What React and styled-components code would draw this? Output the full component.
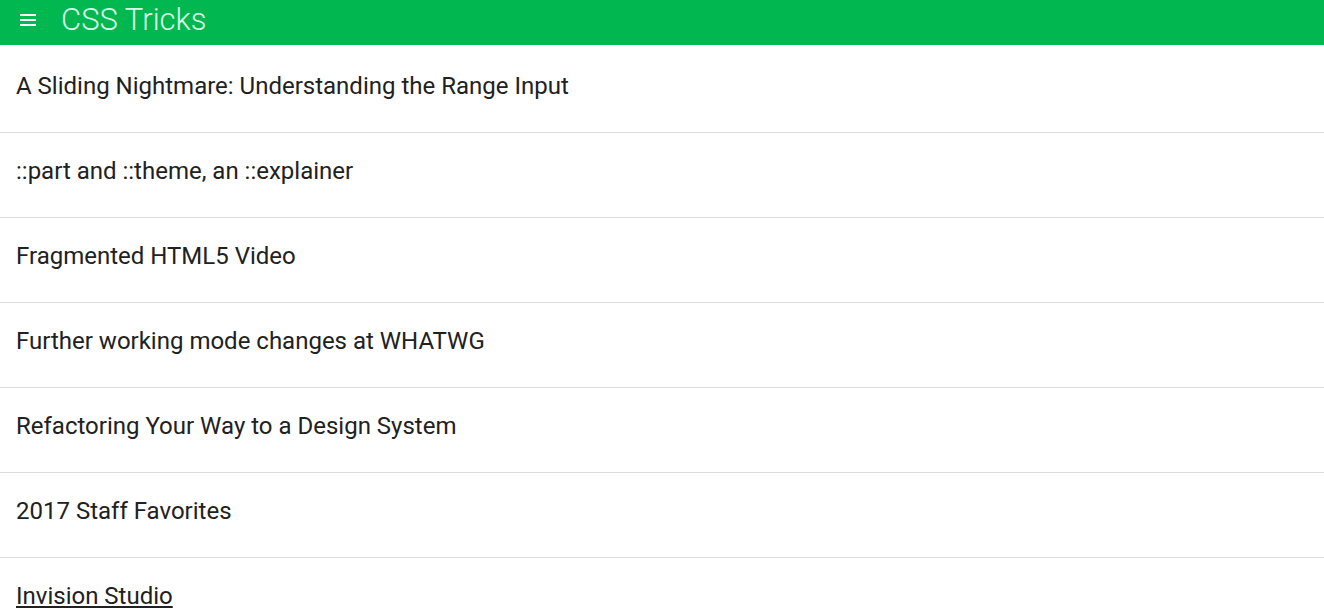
import React from 'react'
import styled, { createGlobalStyle } from 'styled-components'

const GlobalStyle = createGlobalStyle`
  body {
    margin: 0;
    font-family: Roboto, "Liberation Sans", sans-serif;
    background: #fff;
    color: #212121;
  }
`

const Page = styled.div`
  display: flex;
  flex-direction: column;
  height: 610px;
  overflow: hidden;
`

const Toolbar = styled.header`
  display: flex;
  align-items: center;
  height: 45px;
  flex-shrink: 0;
  background: #00b84f;
  color: #fff;
  padding-left: 20px;
`

const MenuButton = styled.div`
  display: flex;
  flex-direction: column;
  gap: 3px;
  width: 16px;
  margin-top: -6px;
  margin-right: 25px;
  span {
    height: 2px;
    background: #fff;
  }
`

const Title = styled.h1`
  margin: 0;
  margin-top: -7px;
  font-size: 31px;
  font-weight: 300;
  color: #d9ffe6;
`

const List = styled.ul`
  list-style: none;
  margin: 0;
  padding: 3px 0 0;
`

const Item = styled.li`
  display: flex;
  align-items: center;
  box-sizing: border-box;
  height: 85px;
  padding: 0 0 8px 16px;
  border-bottom: 1px solid #dcdcdc;
  font-size: 24px;
  color: #212121;
  text-decoration: ${(p) => (p.$active ? 'underline' : 'none')};
`

const posts = [
  'A Sliding Nightmare: Understanding the Range Input',
  '::part and ::theme, an ::explainer',
  'Fragmented HTML5 Video',
  'Further working mode changes at WHATWG',
  'Refactoring Your Way to a Design System',
  '2017 Staff Favorites',
  'Invision Studio',
]

const App = () => {
  return (
    <Page>
      <GlobalStyle />
      <Toolbar>
        <MenuButton>
          <span />
          <span />
          <span />
        </MenuButton>
        <Title>CSS Tricks</Title>
      </Toolbar>
      <List>
        {posts.map((title, i) => (
          <Item key={title} $active={i === posts.length - 1}>
            {title}
          </Item>
        ))}
      </List>
    </Page>
  )
}

export default App
